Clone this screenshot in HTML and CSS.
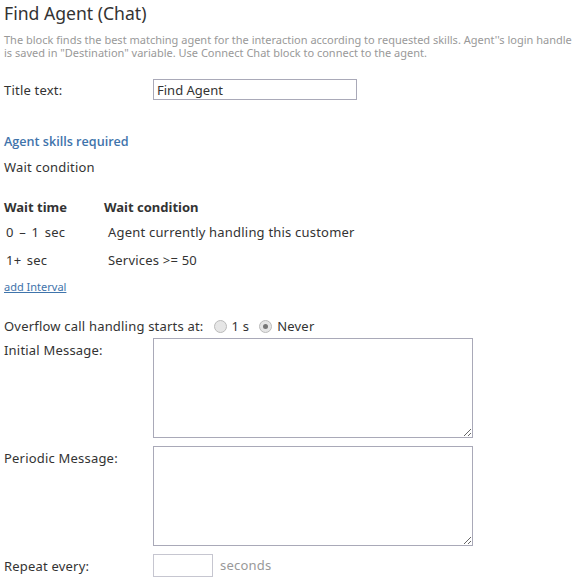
FILE: index.html
```html
<!DOCTYPE html>
<html lang="en">
<head>
  <meta charset="UTF-8">
  <title>Find Agent (Chat)</title>
  <link rel="stylesheet" href="styles.css">
</head>
<body>
  <h1 class="title">Find Agent (Chat)</h1>
  <p class="desc">The block finds the best matching agent for the interaction according to requested skills. Agent''s login handle is saved in "Destination" variable. Use Connect Chat block to connect to the agent.</p>

  <div class="row title-row">
    <label class="lbl">Title text:</label>
    <input type="text" class="text-input" value="Find Agent">
  </div>

  <h3 class="section">Agent skills required</h3>
  <div class="sub">Wait condition</div>

  <table class="waits">
    <tr><th class="c1">Wait time</th><th>Wait condition</th></tr>
    <tr><td class="c1">0 &ndash; 1 sec</td><td>Agent currently handling this customer</td></tr>
    <tr><td class="c1">1+ sec</td><td>Services &gt;= 50</td></tr>
  </table>
  <a href="#" class="add-link">add Interval</a>

  <div class="overflow">
    Overflow call handling starts at:
    <span class="radio"></span><span class="opt">1 s</span>
    <span class="radio on"></span><span class="opt">Never</span>
  </div>

  <div class="row area-row">
    <label class="lbl">Initial Message:</label>
    <textarea class="msg"></textarea>
  </div>
  <div class="row area-row">
    <label class="lbl">Periodic Message:</label>
    <textarea class="msg"></textarea>
  </div>
  <div class="row repeat-row">
    <label class="lbl">Repeat every:</label>
    <input type="text" class="small-input">
    <span class="unit">seconds</span>
  </div>
</body>
</html>
```

FILE: styles.css
```css
body {
  margin: 0;
  padding: 0 4px;
  font-family: "Noto Sans", "Open Sans", sans-serif;
  font-size: 13px;
  letter-spacing: 0.2px;
  color: #333;
  background: #fff;
}
.title {
  margin: 0;
  padding-top: 1px;
  font-size: 17.6px;
  font-weight: normal;
  letter-spacing: 0;
  line-height: 24px;
  color: #333;
}
.desc {
  margin: 8px 0 0;
  font-size: 11px;
  letter-spacing: 0;
  line-height: 13px;
  color: #999;
}
.row {
  display: flex;
  align-items: flex-start;
}
.lbl {
  width: 149px;
  flex: none;
}
.title-row {
  margin-top: 20px;
  align-items: center;
}
.text-input {
  width: 204px;
  height: 21px;
  box-sizing: border-box;
  border: 1px solid #a9a9b8;
  padding: 0 3px;
  font-family: "Noto Sans", "Open Sans", sans-serif;
  font-size: 13px;
  color: #333;
}
.section {
  margin: 33px 0 0;
  font-family: "Open Sans", sans-serif;
  font-size: 12.6px;
  font-weight: 600;
  letter-spacing: 0;
  color: #3f74ab;
  line-height: 18px;
}
.sub {
  margin-top: 7px;
  line-height: 18px;
}
.waits {
  border-collapse: collapse;
  margin-top: 22px;
}
.waits th {
  text-align: left;
  font-weight: bold;
  letter-spacing: 0;
  padding: 0 0 3px;
  line-height: 18px;
}
.waits td {
  padding: 4px 0 6px 4px;
  line-height: 18px;
}
.waits th.c1 { width: 100px; }
.waits td.c1 { width: 96px; padding-left: 2px; word-spacing: 2px; }
.add-link {
  display: block;
  margin-top: 5px;
  font-size: 11px;
  letter-spacing: 0;
  color: #3f74ab;
  line-height: 14px;
}
.overflow {
  margin-top: 23px;
  line-height: 18px;
  display: flex;
  align-items: center;
}
.radio {
  display: inline-block;
  width: 11px;
  height: 11px;
  border: 1px solid #bbb;
  border-radius: 50%;
  background: #e6e6e6;
  margin: 0 5px 0 10px;
  position: relative;
}
.radio.on::after {
  content: "";
  position: absolute;
  left: 3px;
  top: 3px;
  width: 5px;
  height: 5px;
  border-radius: 50%;
  background: #777;
}
.area-row {
  margin-top: 3px;
}
.area-row .lbl {
  padding-top: 3px;
}
.msg {
  width: 320px;
  height: 100px;
  box-sizing: border-box;
  border: 1px solid #a9a9b8;
  margin: 0;
  resize: both;
}
.area-row + .area-row {
  margin-top: 8px;
}
.repeat-row {
  margin-top: 8px;
  align-items: center;
}
.repeat-row .lbl {
  padding-top: 1px;
}
.small-input {
  width: 60px;
  height: 23px;
  box-sizing: border-box;
  border: 1px solid #c6c6d0;
}
.unit {
  margin-left: 7px;
  color: #999;
  margin-top: -2px;
}
```
